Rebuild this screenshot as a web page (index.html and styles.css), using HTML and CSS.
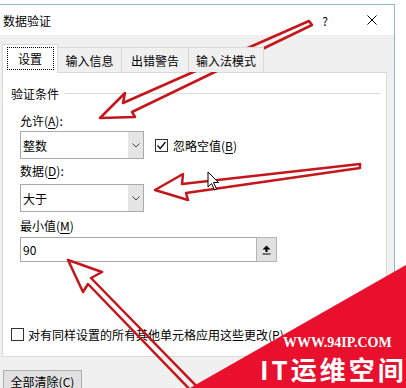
FILE: index.html
```html
<!DOCTYPE html>
<html lang="zh-CN">
  <head>
    <meta charset="UTF-8" />
    <meta name="viewport" content="width=device-width, initial-scale=1.0" />
    <title>数据验证</title>
    <link rel="stylesheet" href="styles.css">
  </head>
  <body>
    <div class="window">
      <div class="titlebar">
        <span class="title">数据验证</span>
        <span class="help">?</span>
        <svg class="close" width="10" height="10" viewBox="0 0 10 10">
          <path d="M0.5 0.5 L9.5 9.5 M9.5 0.5 L0.5 9.5" stroke="#000" stroke-width="1" />
        </svg>
      </div>
      <div class="body">
        <div class="tabs">
          <div class="tab active"><span class="focus">设置</span></div>
          <div class="tab t2">输入信息</div>
          <div class="tab t3">出错警告</div>
          <div class="tab t4">输入法模式</div>
        </div>
        <div class="panel">
          <div class="group">
            <span>验证条件</span>
            <span class="rule"></span>
          </div>
          <div class="fields">
            <div class="label first">允许(<u>A</u>):</div>
            <div class="row">
              <div class="combo">
                <span class="value">整数</span>
                <span class="drop">
                  <svg width="8" height="5" viewBox="0 0 8 5"><path d="M0.5 0.5 L4 4 L7.5 0.5" fill="none" stroke="#444" stroke-width="1" /></svg>
                </span>
              </div>
              <div class="check">
                <span class="box">
                  <svg width="11" height="11" viewBox="0 0 11 11"><path d="M1.5 5.5 L4.2 8.5 L9.5 2" fill="none" stroke="#000" stroke-width="1.2" /></svg>
                </span>
                <span>忽略空值(<u>B</u>)</span>
              </div>
            </div>
            <div class="label second">数据(<u>D</u>):</div>
            <div class="combo c2">
              <span class="value">大于</span>
              <span class="drop">
                <svg width="8" height="5" viewBox="0 0 8 5"><path d="M0.5 0.5 L4 4 L7.5 0.5" fill="none" stroke="#444" stroke-width="1" /></svg>
              </span>
            </div>
            <div class="label third">最小值(<u>M</u>)</div>
            <div class="input">
              <span class="value">90</span>
              <span class="picker">
                <svg width="9" height="10" viewBox="0 0 9 10"><path d="M4.5 0.5 L8.5 4.5 L5.5 4.5 L5.5 7 L3.5 7 L3.5 4.5 L0.5 4.5 Z M0.5 8.5 L8.5 8.5 L8.5 9.5 L0.5 9.5 Z" fill="#000" /></svg>
              </span>
            </div>
          </div>
          <div class="check apply">
            <span class="box"></span>
            <span>对有同样设置的所有其他单元格应用这些更改(<u>P</u>)</span>
          </div>
        </div>
        <div class="footer">
          <button type="button">全部清除(<u>C</u>)</button>
        </div>
      </div>
    </div>

    <svg class="marks" width="406" height="388" viewBox="0 0 406 388">
      <g fill="none" stroke="#c4161c" stroke-width="2.5" stroke-linejoin="round">
        <polygon points="100,118 125,93 123,103 309,21 312,25 132,112 135,117" />
        <polygon points="155,190 183,174 182,184 360,164 360,168 186,193 188,200" />
        <polygon points="68,260 102,272 91,278 210,400 200,400 88,284 83,292" />
      </g>
      <polygon points="208,172 208,187 211.5,183.5 214.5,190 216.5,189 213.5,182.5 218.5,182.5" fill="#fff" stroke="#000" stroke-width="1" />
      <polygon points="406,265 406,388 190,388" fill="#e8102c" />
    </svg>
    <div class="wm-url">WWW.94IP.COM</div>
    <div class="wm-name">IT运维空间</div>
  </body>
</html>
```

FILE: styles.css
```css
* {
  box-sizing: border-box;
}

body {
  margin: 0;
  width: 406px;
  height: 388px;
  overflow: hidden;
  position: relative;
  background-color: #fff;
  font-family: "Noto Sans CJK SC", "Noto Sans", sans-serif;
  font-size: 12px;
  color: #000;
}

u {
  text-decoration: underline;
  text-underline-offset: 2px;
}

.window {
  width: 395px;
  height: 384px;
  margin-top: 4px;
  border-top: 1px solid #8fb5d9;
  border-right: 1px solid #8fb5d9;
  display: flex;
  flex-direction: column;
  overflow: hidden;
}

.titlebar {
  height: 30px;
  flex: none;
  display: flex;
  align-items: center;
  padding-left: 3px;
  background-color: #fff;
}

.title {
  flex: 1;
}

.help {
  width: 10px;
  text-align: center;
  margin-right: 37px;
}

.close {
  margin-right: 17px;
}

.body {
  flex: 1;
  background-color: #f0f0f0;
  padding-top: 9px;
}

.tabs {
  height: 28px;
  display: flex;
  align-items: flex-end;
  padding-left: 2px;
  position: relative;
  z-index: 1;
}

.tab {
  height: 25px;
  display: flex;
  align-items: center;
  justify-content: center;
  border: 1px solid #d9d9d9;
  border-left: none;
  border-bottom: none;
  background-color: #f0f0f0;
}

.tab.active {
  width: 56px;
  height: 29px;
  margin-bottom: -1px;
  border-left: 1px solid #d9d9d9;
  background-color: #fff;
}

.focus {
  width: 47px;
  height: 23px;
  margin-top: -2px;
  display: flex;
  align-items: center;
  justify-content: center;
  border: 1px dotted #000;
}

.t2 {
  width: 64px;
}

.t3 {
  width: 67px;
}

.t4 {
  width: 75px;
}

.panel {
  width: 385px;
  height: 285px;
  margin-left: 2px;
  border: 1px solid #d9d9d9;
  background-color: #fff;
  padding: 11px 0 0 8px;
}

.group {
  height: 18px;
  display: flex;
  align-items: center;
  gap: 6px;
}

.rule {
  flex: 1;
  height: 1px;
  margin-right: 5px;
  background-color: #dcdcdc;
}

.fields {
  padding-left: 9px;
}

.label {
  line-height: 18px;
  height: 18px;
}

.label.first {
  margin-top: 10px;
}

.label.second {
  margin-top: 3px;
}

.label.third {
  margin-top: 5px;
}

.row {
  display: flex;
  align-items: center;
  gap: 11px;
  margin-top: 1px;
}

.combo {
  width: 124px;
  height: 28px;
  display: flex;
  border: 1px solid #a9a9a9;
  background-color: #fff;
}

.combo.c2 {
  margin-top: 4px;
}

.value {
  flex: 1;
  display: flex;
  align-items: center;
  padding-left: 2px;
}

.drop {
  width: 15px;
  display: flex;
  align-items: center;
  justify-content: center;
  background-color: #e5e5e5;
}

.check {
  display: flex;
  align-items: center;
  gap: 5px;
}

.box {
  width: 13px;
  height: 13px;
  flex: none;
  display: flex;
  align-items: center;
  justify-content: center;
  border: 1px solid #333;
  background-color: #fff;
}

.input {
  width: 257px;
  height: 25px;
  margin-top: 2px;
  display: flex;
  border: 1px solid #a9a9a9;
}

.picker {
  width: 21px;
  margin: -1px -1px -1px 0;
  display: flex;
  align-items: center;
  justify-content: center;
  border: 1px solid #b4b4b4;
  background-color: #e1e1e1;
}

.apply {
  margin-top: 63px;
  height: 18px;
  gap: 4px;
}

.footer {
  padding: 13px 0 0 3px;
}

button {
  width: 79px;
  height: 23px;
  padding: 0;
  border: 1px solid #adadad;
  background-color: #e1e1e1;
  font-family: inherit;
  font-size: 12px;
  color: #000;
}

.marks {
  position: absolute;
  left: 0;
  top: 0;
  pointer-events: none;
}

.wm-url {
  position: absolute;
  left: 283px;
  top: 336px;
  font-family: "Liberation Serif", serif;
  font-weight: bold;
  font-size: 14px;
  line-height: 14px;
  white-space: nowrap;
  color: #fff;
}

.wm-name {
  position: absolute;
  left: 260px;
  top: 355px;
  font-weight: bold;
  font-size: 26px;
  line-height: 27px;
  letter-spacing: 3px;
  white-space: nowrap;
  color: #fff;
}
```
